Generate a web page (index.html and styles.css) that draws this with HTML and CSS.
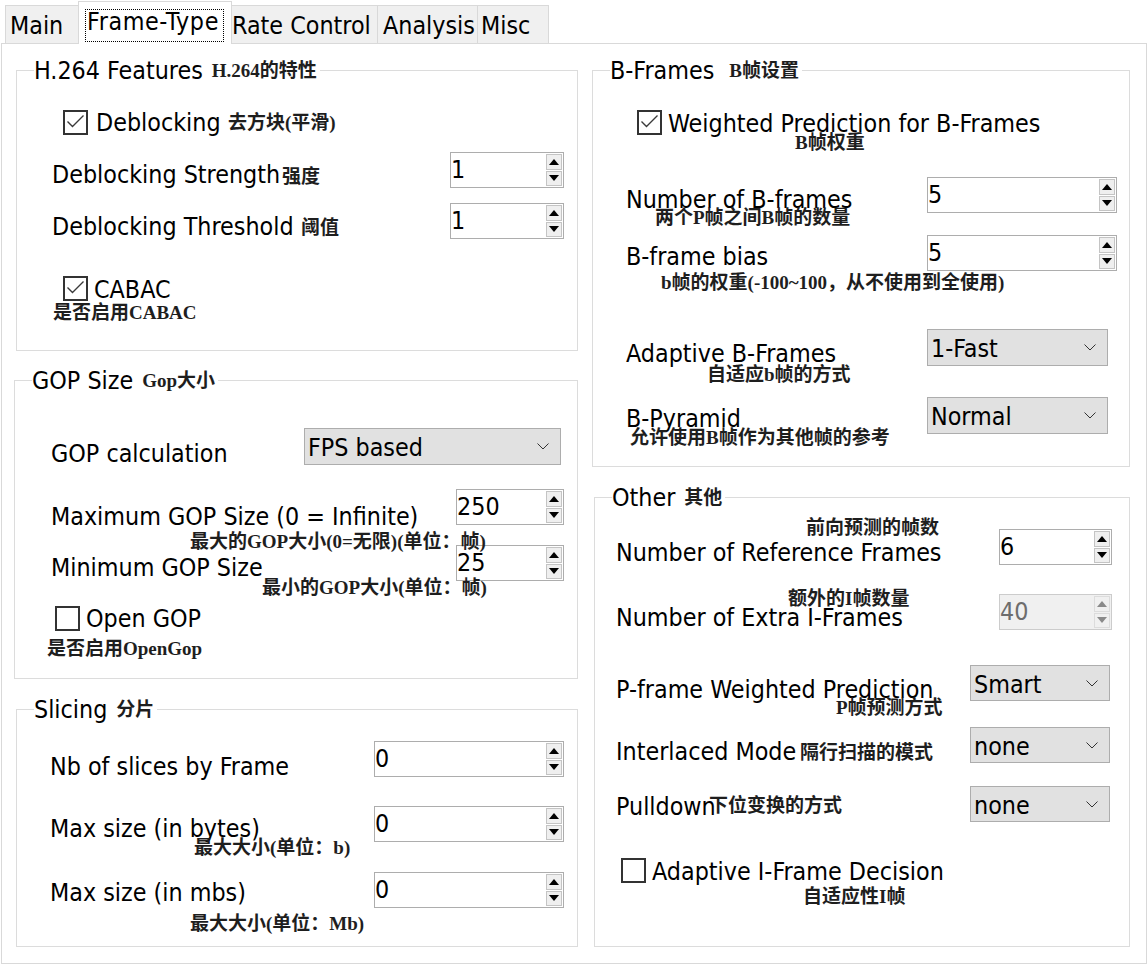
FILE: index.html
```html
<!DOCTYPE html>
<html lang="en">
<head>
<meta charset="utf-8">
<title>Frame-Type</title>
<link rel="stylesheet" href="styles.css">
</head>
<body>
<div class="tabbar">
  <div class="tab t-main">Main</div>
  <div class="tab tab-on t-frame"><span class="focus">Frame-Type</span></div>
  <div class="tab t-rate">Rate Control</div>
  <div class="tab t-analysis">Analysis</div>
  <div class="tab t-misc">Misc</div>
</div>
<div class="pane">
  <div class="col col-left">
    <section class="group g-h264">
      <div class="gtitle"><span>H.264 Features</span><span class="note tnote">H.264的特性</span></div>
      <div class="row cbrow r-deblock">
        <span class="cb"><svg viewBox="0 0 21 21" width="21" height="21"><polyline points="2.5,9.5 7.5,14.5 18.5,3.5" fill="none" stroke="#3a3a3a" stroke-width="1.4"/></svg></span>
        <span class="lbl">Deblocking</span>
      </div>
      <div class="row r-strength">
        <span class="lbl">Deblocking Strength</span>
        <div class="spin w114"><span class="val">1</span><span class="btns"><span class="btn"><i class="up"></i></span><span class="btn"><i class="down"></i></span></span></div>
      </div>
      <div class="row r-thresh">
        <span class="lbl">Deblocking Threshold</span>
        <div class="spin w114"><span class="val">1</span><span class="btns"><span class="btn"><i class="up"></i></span><span class="btn"><i class="down"></i></span></span></div>
      </div>
      <div class="row cbrow r-cabac">
        <span class="cb"><svg viewBox="0 0 21 21" width="21" height="21"><polyline points="2.5,9.5 7.5,14.5 18.5,3.5" fill="none" stroke="#3a3a3a" stroke-width="1.4"/></svg></span>
        <span class="lbl">CABAC</span>
      </div>
      <span class="note n-deblock">去方块(平滑)</span>
      <span class="note n-strength">强度</span>
      <span class="note n-thresh">阈值</span>
      <span class="note n-cabac">是否启用CABAC</span>
    </section>

    <section class="group g-gop">
      <div class="gtitle"><span>GOP Size</span><span class="note tnote">Gop大小</span></div>
      <div class="row r-gopcalc">
        <span class="lbl">GOP calculation</span>
        <div class="combo w257"><span class="val">FPS based</span><svg class="chev" viewBox="0 0 12 7" width="12" height="7"><polyline points="0.5,0.5 6,6 11.5,0.5" fill="none" stroke="#333" stroke-width="1"/></svg></div>
      </div>
      <div class="row r-max">
        <span class="lbl">Maximum GOP Size (0 = Infinite)</span>
        <div class="spin w108"><span class="val">250</span><span class="btns"><span class="btn"><i class="up"></i></span><span class="btn"><i class="down"></i></span></span></div>
      </div>
      <div class="row r-min">
        <span class="lbl">Minimum GOP Size</span>
        <div class="spin w108"><span class="val">25</span><span class="btns"><span class="btn"><i class="up"></i></span><span class="btn"><i class="down"></i></span></span></div>
      </div>
      <div class="row cbrow r-open">
        <span class="cb"></span>
        <span class="lbl">Open GOP</span>
      </div>
      <span class="note n-max">最大的GOP大小(0=无限)(单位：帧)</span>
      <span class="note n-min">最小的GOP大小(单位：帧)</span>
      <span class="note n-open">是否启用OpenGop</span>
    </section>

    <section class="group g-slice">
      <div class="gtitle"><span>Slicing</span><span class="note tnote">分片</span></div>
      <div class="row r-nb">
        <span class="lbl">Nb of slices by Frame</span>
        <div class="spin w190"><span class="val">0</span><span class="btns"><span class="btn"><i class="up"></i></span><span class="btn"><i class="down"></i></span></span></div>
      </div>
      <div class="row r-bytes">
        <span class="lbl">Max size (in bytes)</span>
        <div class="spin w190"><span class="val">0</span><span class="btns"><span class="btn"><i class="up"></i></span><span class="btn"><i class="down"></i></span></span></div>
      </div>
      <div class="row r-mbs">
        <span class="lbl">Max size (in mbs)</span>
        <div class="spin w190"><span class="val">0</span><span class="btns"><span class="btn"><i class="up"></i></span><span class="btn"><i class="down"></i></span></span></div>
      </div>
      <span class="note n-bytes">最大大小(单位：b)</span>
      <span class="note n-mbs">最大大小(单位：Mb)</span>
    </section>
  </div>

  <div class="col col-right">
    <section class="group g-bf">
      <div class="gtitle"><span>B-Frames</span><span class="note tnote tnote-b">B帧设置</span></div>
      <div class="row cbrow r-wp">
        <span class="cb"><svg viewBox="0 0 21 21" width="21" height="21"><polyline points="2.5,9.5 7.5,14.5 18.5,3.5" fill="none" stroke="#3a3a3a" stroke-width="1.4"/></svg></span>
        <span class="lbl">Weighted Prediction for B-Frames</span>
      </div>
      <div class="row r-nbf">
        <span class="lbl">Number of B-frames</span>
        <div class="spin w190"><span class="val">5</span><span class="btns"><span class="btn"><i class="up"></i></span><span class="btn"><i class="down"></i></span></span></div>
      </div>
      <div class="row r-bias">
        <span class="lbl">B-frame bias</span>
        <div class="spin w190"><span class="val">5</span><span class="btns"><span class="btn"><i class="up"></i></span><span class="btn"><i class="down"></i></span></span></div>
      </div>
      <div class="row r-adapt">
        <span class="lbl">Adaptive B-Frames</span>
        <div class="combo w181"><span class="val">1-Fast</span><svg class="chev" viewBox="0 0 12 7" width="12" height="7"><polyline points="0.5,0.5 6,6 11.5,0.5" fill="none" stroke="#333" stroke-width="1"/></svg></div>
      </div>
      <div class="row r-pyr">
        <span class="lbl">B-Pyramid</span>
        <div class="combo w181"><span class="val">Normal</span><svg class="chev" viewBox="0 0 12 7" width="12" height="7"><polyline points="0.5,0.5 6,6 11.5,0.5" fill="none" stroke="#333" stroke-width="1"/></svg></div>
      </div>
      <span class="note n-wp">B帧权重</span>
      <span class="note n-nbf">两个P帧之间B帧的数量</span>
      <span class="note n-bias">b帧的权重(-100~100，从不使用到全使用)</span>
      <span class="note n-adapt">自适应b帧的方式</span>
      <span class="note n-pyr">允许使用B帧作为其他帧的参考</span>
    </section>

    <section class="group g-other">
      <div class="gtitle"><span>Other</span><span class="note tnote">其他</span></div>
      <div class="row r-ref">
        <span class="lbl">Number of Reference Frames</span>
        <div class="spin w113"><span class="val">6</span><span class="btns"><span class="btn"><i class="up"></i></span><span class="btn"><i class="down"></i></span></span></div>
      </div>
      <div class="row r-extra">
        <span class="lbl">Number of Extra I-Frames</span>
        <div class="spin w113 disabled"><span class="val">40</span><span class="btns"><span class="btn"><i class="up"></i></span><span class="btn"><i class="down"></i></span></span></div>
      </div>
      <div class="row r-pw">
        <span class="lbl">P-frame Weighted Prediction</span>
        <div class="combo w140"><span class="val">Smart</span><svg class="chev" viewBox="0 0 12 7" width="12" height="7"><polyline points="0.5,0.5 6,6 11.5,0.5" fill="none" stroke="#333" stroke-width="1"/></svg></div>
      </div>
      <div class="row r-inter">
        <span class="lbl">Interlaced Mode</span>
        <div class="combo w140"><span class="val">none</span><svg class="chev" viewBox="0 0 12 7" width="12" height="7"><polyline points="0.5,0.5 6,6 11.5,0.5" fill="none" stroke="#333" stroke-width="1"/></svg></div>
      </div>
      <div class="row r-pull">
        <span class="lbl">Pulldown</span>
        <div class="combo w140"><span class="val">none</span><svg class="chev" viewBox="0 0 12 7" width="12" height="7"><polyline points="0.5,0.5 6,6 11.5,0.5" fill="none" stroke="#333" stroke-width="1"/></svg></div>
      </div>
      <div class="row cbrow r-aif">
        <span class="cb"></span>
        <span class="lbl">Adaptive I-Frame Decision</span>
      </div>
      <span class="note n-ref">前向预测的帧数</span>
      <span class="note n-extra">额外的I帧数量</span>
      <span class="note n-pw">P帧预测方式</span>
      <span class="note n-inter">隔行扫描的模式</span>
      <span class="note n-pull">下位变换的方式</span>
      <span class="note n-aif">自适应性I帧</span>
    </section>
  </div>
</div>
</body>
</html>
```

FILE: styles.css
```css
* { box-sizing: border-box; }
html, body { margin: 0; padding: 0; background: #fff; }
body {
  width: 1148px;
  height: 965px;
  overflow: hidden;
  font-family: "DejaVu Sans Condensed", "Liberation Sans", sans-serif;
  font-size: 24.8px;
  line-height: 30px;
  color: #000;
}

/* ---------- tabs ---------- */
.tabbar {
  display: flex;
  align-items: flex-end;
  height: 43px;
  padding-left: 5px;
  position: relative;
  z-index: 1;
}
.tab {
  height: 38px;
  border: 1px solid #d9d9d9;
  border-bottom: none;
  background: #f0f0f0;
  margin-left: -1px;
  padding-top: 5px;
  white-space: nowrap;
}
.tab-on {
  height: 43px;
  margin-bottom: -1px;
  background: #fff;
  padding-top: 5px;
}
.t-main { width: 74px; margin-left: 0; padding-left: 4px; }
.t-frame { width: 154px; padding-left: 6px; }
.t-rate { width: 147px; padding-left: 0; }
.t-analysis { width: 101px; padding-left: 5px; }
.t-misc { width: 72px; padding-left: 3px; }
.focus {
  display: inline-block;
  width: 139px;
  height: 33px;
  border: 1px dotted #000;
  padding-left: 1px;
  line-height: 23px;
  letter-spacing: 0.6px;
}

/* ---------- pane ---------- */
.pane {
  margin-left: 1px;
  width: 1146px;
  height: 921px;
  border: 1px solid #d9d9d9;
  display: flex;
  align-items: flex-start;
}
.col { display: flex; flex-direction: column; }
.col-left { margin-left: 14px; width: 562px; }
.col-right { margin-left: 14px; width: 538px; }

.group {
  position: relative;
  border: 1px solid #dcdcdc;
  display: flex;
  flex-direction: column;
}
.g-h264 { margin-top: 26px; height: 281px; }
.g-gop { margin-top: 29px; margin-left: -2px; width: 564px; height: 299px; }
.g-slice { margin-top: 30px; height: 238px; }
.g-bf { margin-top: 26px; height: 397px; }
.g-other { margin-top: 30px; margin-left: 2px; width: 536px; height: 450px; }

.gtitle {
  position: absolute;
  top: -15px;
  left: 17px;
  height: 30px;
  display: flex;
  align-items: center;
  gap: 9px;
  padding-right: 3px;
  background: #fff;
  white-space: nowrap;
}

/* ---------- annotation overlay ---------- */
.note {
  font-family: "Liberation Serif", "Noto Sans CJK SC", serif;
  font-weight: 700;
  font-size: 19px;
  line-height: 20px;
  color: #1e1e1e;
  white-space: nowrap;
}
.group > .note { position: absolute; }
.tnote { background: #fff; }
.tnote-b { margin-left: 6px; }

.n-deblock { left: 211px; top: 42px; }
.n-strength { left: 265px; top: 96px; }
.n-thresh { left: 284px; top: 147px; }
.n-cabac { left: 36px; top: 232px; }

.n-max { left: 175px; top: 151px; }
.n-min { left: 247px; top: 197px; }
.n-open { left: 32px; top: 258px; }

.n-bytes { left: 177px; top: 128px; }
.n-mbs { left: 173px; top: 204px; }

.n-wp { left: 202px; top: 62px; }
.n-nbf { left: 62px; top: 137px; }
.n-bias { left: 68px; top: 202px; }
.n-adapt { left: 114px; top: 294px; }
.n-pyr { left: 37px; top: 357px; }

.n-ref { left: 211px; top: 20px; }
.n-extra { left: 193px; top: 91px; }
.n-pw { left: 241px; top: 200px; }
.n-inter { left: 205px; top: 245px; }
.n-pull { left: 114px; top: 298px; }
.n-aif { left: 208px; top: 389px; }

/* ---------- rows ---------- */
.row {
  display: flex;
  align-items: flex-start;
  height: 36px;
  flex: none;
}
.cbrow { height: 25px; }
.lbl { white-space: nowrap; }
.row > .lbl:first-child { margin-left: 1px; }
.row .spin, .row .combo { margin-left: auto; }

/* H.264 */
.g-h264 .row { padding-left: 34px; padding-right: 13px; }
.g-h264 .cbrow { padding-left: 46px; }
.r-deblock { margin-top: 39px; }
.r-deblock .cb { margin-right: 8px; }
.r-deblock .lbl { margin-top: -2.5px; }
.r-strength { margin-top: 17px; }
.r-strength .lbl { margin-top: 7.5px; }
.r-thresh { margin-top: 15px; }
.r-thresh .lbl { margin-top: 8.5px; }
.r-cabac { margin-top: 37px; }
.r-cabac .lbl { margin-top: -1.5px; }

/* GOP */
.g-gop .row { padding-left: 35px; padding-right: 13px; }
.g-gop .cbrow { padding-left: 40px; }
.g-gop .r-gopcalc { padding-right: 16px; height: 37px; }
.r-gopcalc { margin-top: 47px; }
.r-gopcalc .lbl { margin-top: 10.5px; }
.r-max { margin-top: 24px; }
.r-max .lbl { margin-top: 12.5px; }
.r-min { margin-top: 20px; }
.r-min .lbl { margin-top: 7.5px; }
.r-open { margin-top: 25px; }
.r-open .lbl { margin-top: -2.5px; }

/* Slicing */
.g-slice .row { padding-left: 32px; padding-right: 13px; }
.r-nb { margin-top: 31px; }
.r-nb .lbl { margin-top: 10.5px; }
.r-bytes { margin-top: 29px; }
.r-bytes .lbl { margin-top: 7.5px; }
.r-mbs { margin-top: 30px; }
.r-mbs .lbl { margin-top: 5.5px; }

/* B-Frames */
.g-bf .row { padding-left: 32px; padding-right: 12px; }
.g-bf .cbrow { padding-left: 44px; }
.g-bf .r-adapt, .g-bf .r-pyr { padding-right: 21px; height: 37px; }
.r-wp { margin-top: 39px; }
.r-wp .lbl { margin-top: -1.5px; }
.r-nbf { margin-top: 42px; }
.r-nbf .lbl { margin-top: 7.5px; }
.r-bias { margin-top: 22px; }
.r-bias .lbl { margin-top: 6.5px; }
.r-adapt { margin-top: 58px; }
.r-adapt .lbl { margin-top: 9.5px; }
.r-pyr { margin-top: 31px; }
.r-pyr .lbl { margin-top: 6.5px; }

/* Other */
.g-other .row { padding-left: 20px; padding-right: 17px; }
.g-other .cbrow { padding-left: 26px; }
.g-other .r-pw, .g-other .r-inter, .g-other .r-pull { padding-right: 19px; }
.r-ref { margin-top: 31px; }
.r-ref .lbl { margin-top: 8.5px; }
.r-extra { margin-top: 29px; }
.r-extra .lbl { margin-top: 8.5px; }
.r-pw { margin-top: 35px; }
.r-pw .lbl { margin-top: 9.5px; }
.r-inter { margin-top: 26px; }
.r-inter .lbl { margin-top: 9.5px; }
.r-pull { margin-top: 23px; }
.r-pull .lbl { margin-top: 5.5px; }
.r-aif { margin-top: 36px; }
.r-aif .lbl { margin-top: -1.5px; }

/* ---------- checkbox ---------- */
.cb {
  width: 25px;
  height: 25px;
  flex: none;
  border: 2px solid #333;
  background: #fff;
  margin-right: 6px;
  display: flex;
}

/* ---------- spin box ---------- */
.spin {
  display: flex;
  height: 36px;
  flex: none;
  border: 1px solid #adadad;
  background: #fff;
}
.spin .val {
  flex: 1;
  padding: 2px 0 0 0;
  line-height: 30px;
}
.btns {
  width: 16px;
  margin: 1px 1px 1px 0;
  display: flex;
  flex-direction: column;
  gap: 1px;
}
.btn {
  flex: 1;
  border: 1px solid #c4c4c4;
  background: #efefef;
  display: flex;
  align-items: center;
  justify-content: center;
}
.up, .down {
  width: 0;
  height: 0;
  border-left: 5px solid transparent;
  border-right: 5px solid transparent;
}
.up { border-bottom: 6px solid #000; }
.down { border-top: 6px solid #000; }
.disabled { background: #f0f0f0; border-color: #cccccc; }
.disabled .val { color: #6d6d6d; }
.disabled .btn { border-color: #dcdcdc; background: #f0f0f0; }
.disabled .up { border-bottom-color: #8a8a8a; }
.disabled .down { border-top-color: #8a8a8a; }

.w114 { width: 114px; }
.w108 { width: 108px; }
.w190 { width: 190px; }
.w113 { width: 113px; }

/* ---------- combo ---------- */
.combo {
  display: flex;
  align-items: center;
  height: 36px;
  flex: none;
  border: 1px solid #adadad;
  background: #e1e1e1;
  padding: 0 11px 0 3px;
}
.r-gopcalc .combo, .r-adapt .combo, .r-pyr .combo { height: 37px; }
.combo .val { flex: 1; line-height: 30px; padding-top: 3px; }
.chev { flex: none; }
.w257 { width: 257px; }
.w181 { width: 181px; }
.w140 { width: 140px; }
```
